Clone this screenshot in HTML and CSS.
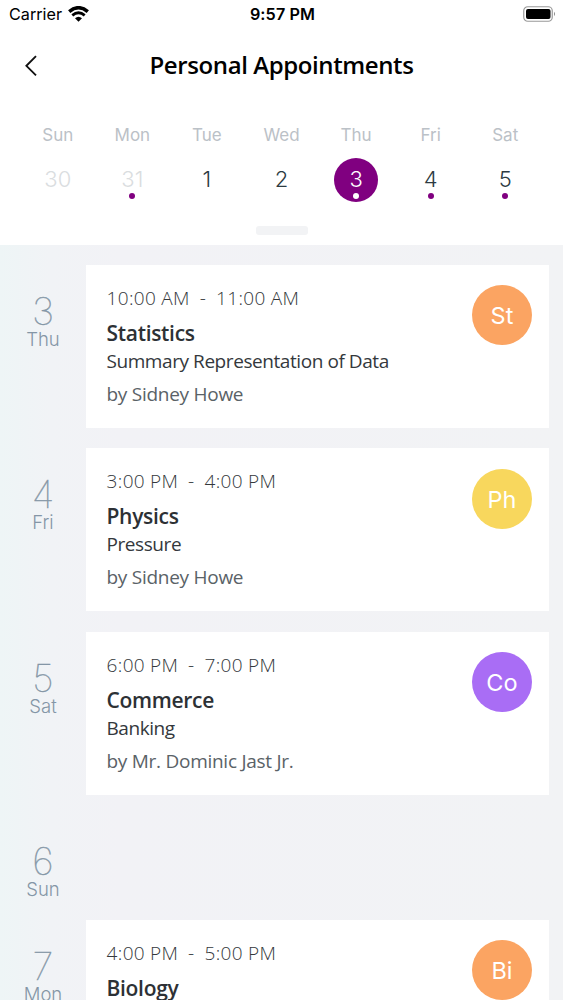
FILE: index.html
```html
<!DOCTYPE html>
<html lang="en"><head><meta charset="utf-8"><title>Personal Appointments</title><link rel="stylesheet" href="styles.css"></head>
<body>
<header class="top">
<div class="status"><div class="carrier"><span>Carrier</span><svg class="wifi" width="21" height="16" viewBox="0 0 21 16"><path d="M1.200 5.600Q10.500-2.200 19.800 5.600" fill="none" stroke="#000" stroke-width="3.500"/><path d="M4.300 9.300Q10.500 4.200 16.700 9.300" fill="none" stroke="#000" stroke-width="2.800"/><path d="M7 12.300Q10.500 9.300 14 12.300L10.500 15.700Z"/></svg></div><span class="clock">9:57 PM</span><svg class="battery" width="33" height="17" viewBox="0 0 33 17"><rect x=".75" y=".75" width="28.500" height="14.500" rx="4" fill="none" stroke="#999" stroke-width="1.200"/><rect x="3" y="3" width="24.500" height="10" rx="2"/><path d="M31 5.800Q33 8 31 10.200Z" fill="#888"/></svg></div>
<div class="nav"><svg class="back" width="14" height="22" viewBox="0 0 14 22"><path d="M12 1.200L2.400 10.800L12 20.400" fill="none" stroke="#111" stroke-width="1.900"/></svg><h1>Personal Appointments</h1></div>
<div class="week">
<div class="day off"><span>Sun</span><b>30</b></div><div class="day off dot"><span>Mon</span><b>31</b></div><div class="day"><span>Tue</span><b>1</b></div><div class="day"><span>Wed</span><b>2</b></div><div class="day dot sel"><span>Thu</span><b>3</b></div><div class="day dot"><span>Fri</span><b>4</b></div><div class="day dot"><span>Sat</span><b>5</b></div>
</div>
<div class="handle"></div>
</header>
<main>
<section class="row"><div class="date"><b>3</b><span>Thu</span></div><article class="card"><div class="info"><p class="time">10:00 AM&nbsp; -&nbsp; 11:00 AM</p><h2>Statistics</h2><p class="topic">Summary Representation of Data</p><p class="by">by Sidney Howe</p></div><div class="avatar orange">St</div></article></section>
<section class="row"><div class="date"><b>4</b><span>Fri</span></div><article class="card"><div class="info"><p class="time">3:00 PM&nbsp; -&nbsp; 4:00 PM</p><h2>Physics</h2><p class="topic">Pressure</p><p class="by">by Sidney Howe</p></div><div class="avatar yellow">Ph</div></article></section>
<section class="row"><div class="date"><b>5</b><span>Sat</span></div><article class="card"><div class="info"><p class="time">6:00 PM&nbsp; -&nbsp; 7:00 PM</p><h2>Commerce</h2><p class="topic">Banking</p><p class="by">by Mr. Dominic Jast Jr.</p></div><div class="avatar purple">Co</div></article></section>
<section class="row empty"><div class="date"><b>6</b><span>Sun</span></div></section>
<section class="row"><div class="date"><b>7</b><span>Mon</span></div><article class="card"><div class="info"><p class="time">4:00 PM&nbsp; -&nbsp; 5:00 PM</p><h2>Biology</h2></div><div class="avatar orange">Bi</div></article></section>
</main>
</body></html>
```
FILE: styles.css
```css
* { box-sizing: border-box; margin: 0; }
body { width: 563px; height: 1000px; overflow: hidden; background: #fff; font-family: Inter, "Liberation Sans", sans-serif; color: #000; display: flex; flex-direction: column; }
.top { height: 244.500px; flex: none; display: flex; flex-direction: column; align-items: center; }
.status { width: 100%; height: 30px; padding: 0 7px 2px 9px; display: grid; grid-template-columns: 1fr auto 1fr; align-items: center; font-size: 16.200px; }
.carrier { display: flex; align-items: center; gap: 6px; }
.clock { font-weight: 600; font-size: 16.200px; letter-spacing: .1px; }
.battery { justify-self: end; }
.nav { width: 100%; height: 71px; padding: 0 24px; display: grid; grid-template-columns: 14px 1fr 14px; align-items: center; }
h1 { font: 600 24px/32px "Open Sans", sans-serif; text-align: center; letter-spacing: -.4px; margin-top: -1px; }
.week { width: 522px; margin-top: 23px; display: grid; grid-template-columns: repeat(7, 1fr); }
.day { display: flex; flex-direction: column; align-items: center; gap: 11.500px; }
.day span { font-size: 17px; line-height: 22px; color: #bbc1c7; }
.day b { position: relative; width: 44px; height: 44px; line-height: 43px; text-align: center; border-radius: 50%; font-size: 22px; font-weight: 300; color: #2d3b42; }
.off b { color: #dadde0; }
.dot b::after { content: ""; position: absolute; left: 19px; top: 35.500px; width: 6px; height: 6px; border-radius: 50%; background: purple; }
.day.sel b { background: purple; color: #fff; }
.sel b::after { background: #fff; }
.handle { width: 52px; height: 9px; margin-top: 24px; border-radius: 3px; background: #f2f3f5; }
main { flex: 1; min-height: 0; overflow: hidden; padding: 20.500px 14px 0 0; background: linear-gradient(90deg, #eef5f6 0, #f1f3f6 50px, #f2f2f6 120px, #f2f3f5 100%); }
.row { display: grid; grid-template-columns: 86px 1fr; height: 163px; margin-bottom: 20.400px; }
.row.empty { height: 84.500px; }
.date { display: flex; flex-direction: column; align-items: center; padding-top: 29px; color: #8496a6; }
.date b { font-size: 38px; line-height: 35px; font-weight: 100; -webkit-text-stroke: .4px #8496a6; }
.date span { font-size: 18.500px; line-height: 21px; font-weight: 300; }
.card { background: #fff; padding: 19px 17px 0 20.500px; display: flex; justify-content: space-between; font-family: "Open Sans", sans-serif; }
.time { font-size: 19px; line-height: 28px; font-weight: 300; letter-spacing: .38px; word-spacing: -.4px; color: #34383c; }
h2 { margin-top: 6px; font-size: 21px; line-height: 30px; font-weight: 600; letter-spacing: -.3px; color: #2d3135; }
.topic { font-size: 19px; line-height: 26px; letter-spacing: -.43px; color: #34383c; }
.by { font-size: 19px; line-height: 28px; margin-top: 6px; letter-spacing: -.27px; color: #5a6267; }
.avatar { width: 60px; height: 60px; margin-top: 1.400px; border-radius: 50%; color: #fff; font: 400 23.500px/61px Inter, sans-serif; text-align: center; }
.orange { background: #fba462; }
.yellow { background: #f8d75d; }
.purple { background: #a96df5; }
```
